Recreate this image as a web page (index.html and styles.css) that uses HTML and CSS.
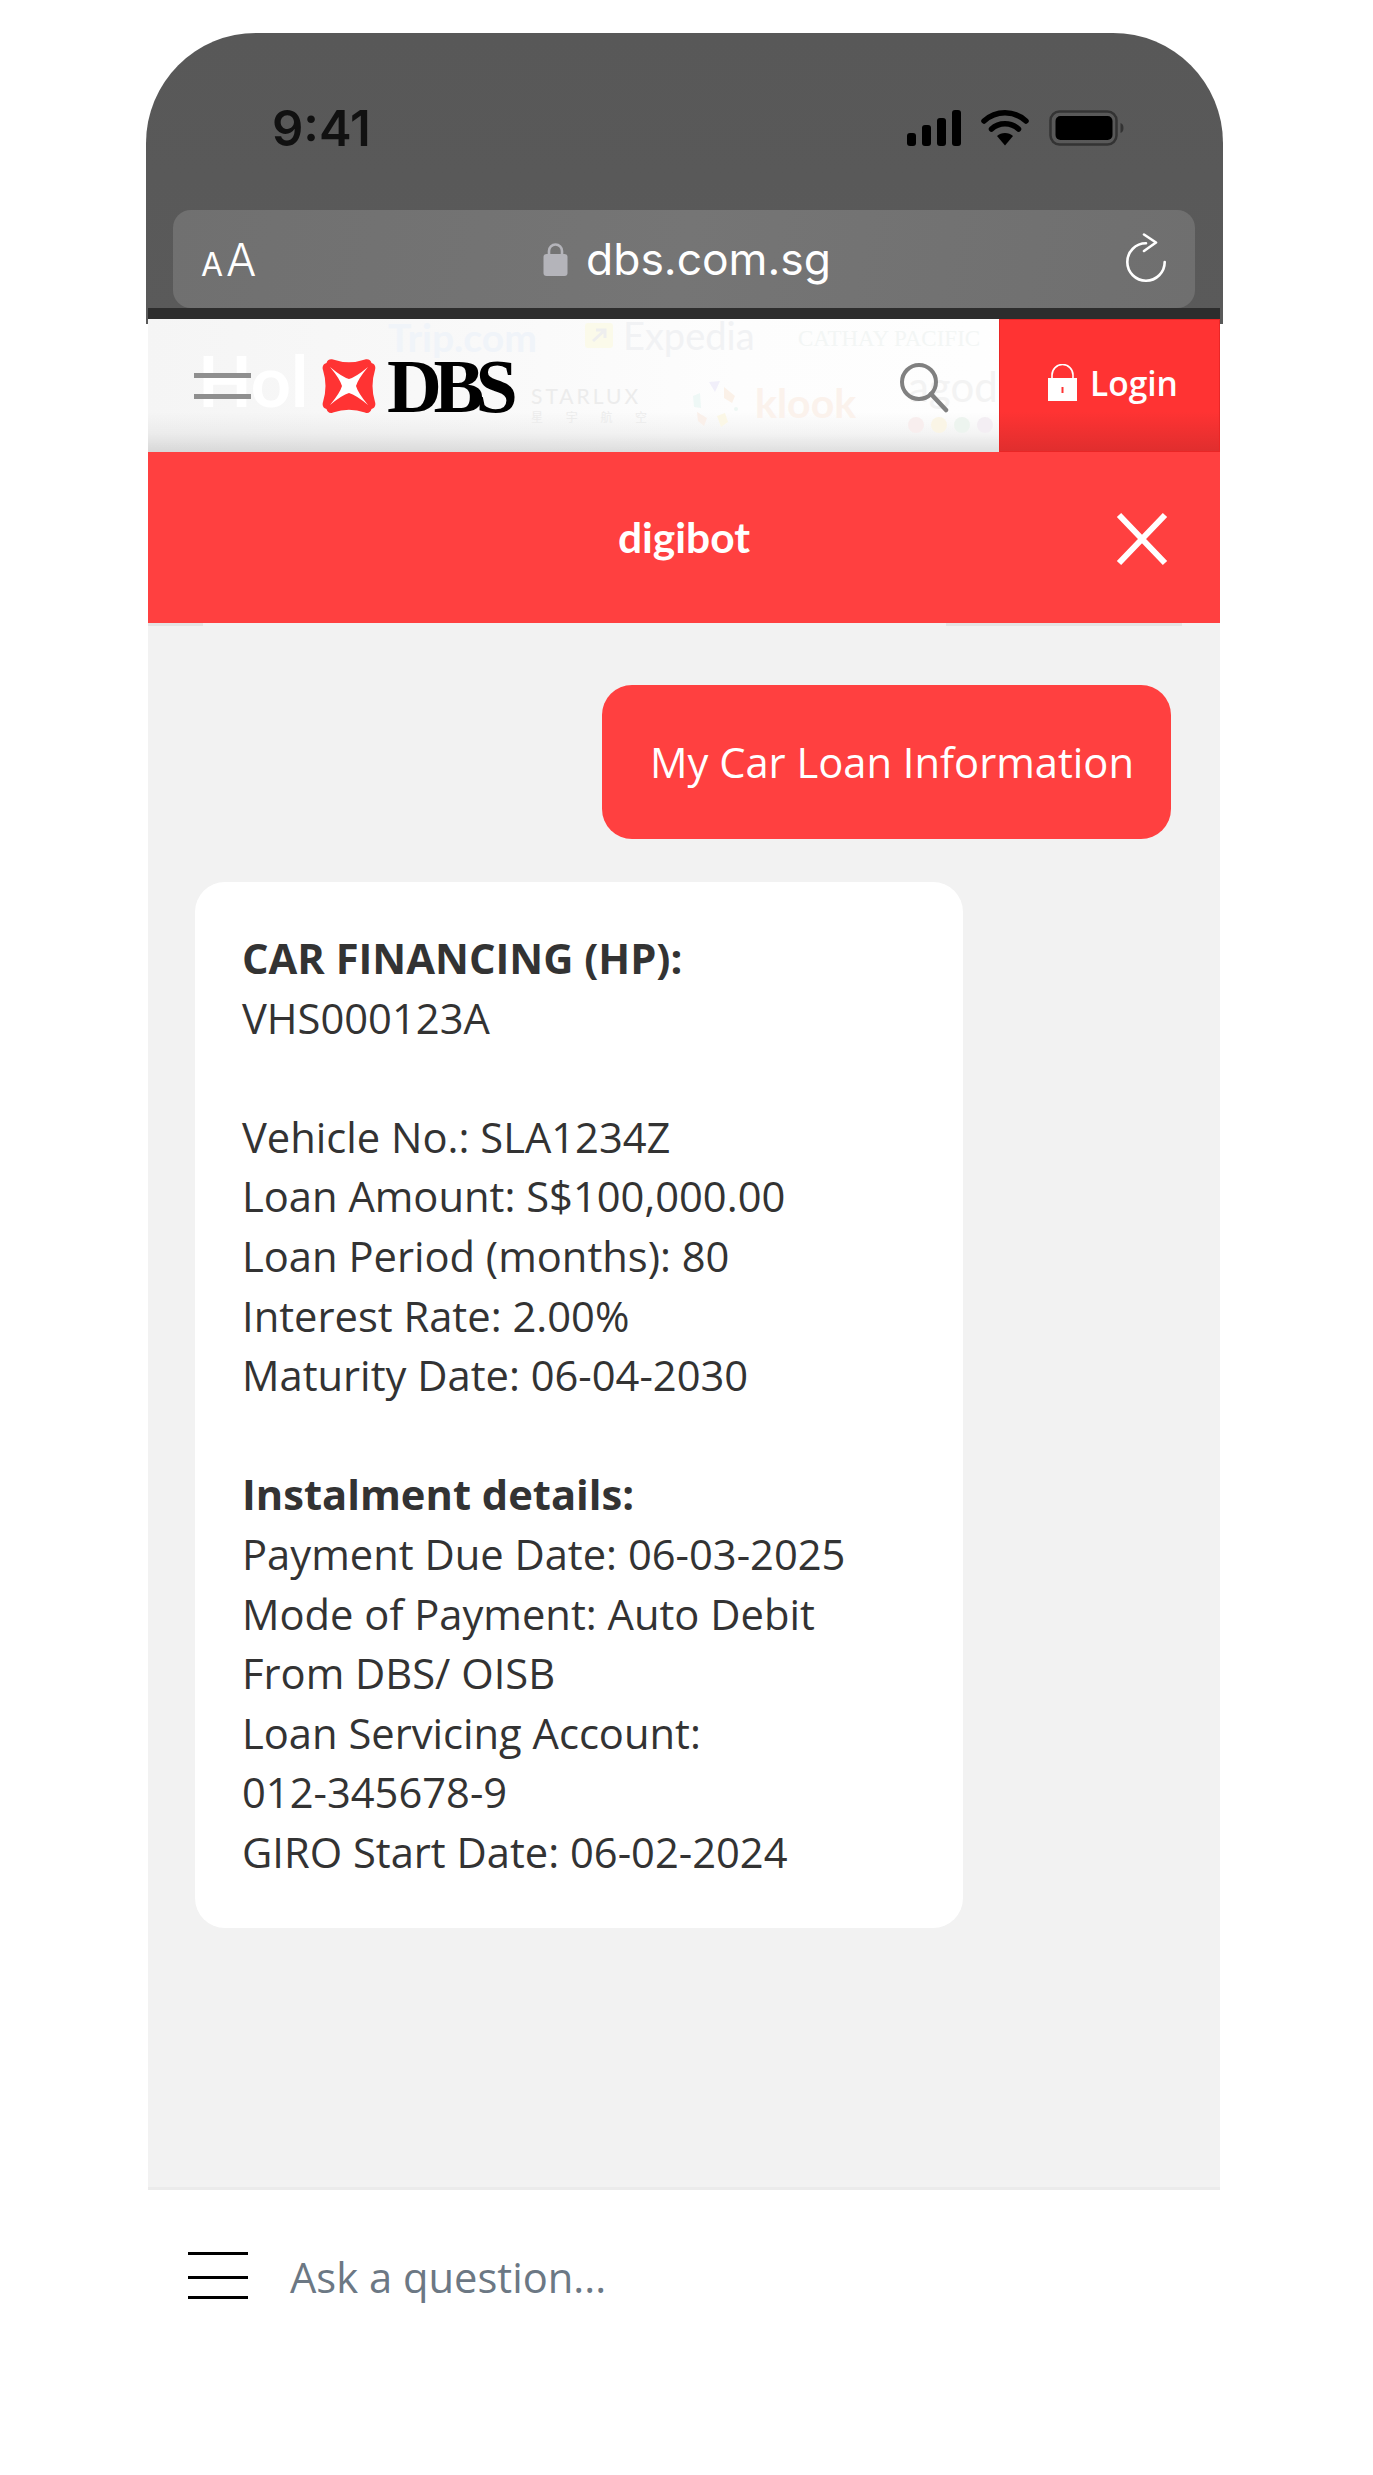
FILE: index.html
```html
<!DOCTYPE html>
<html lang="en">

<head>
    <meta charset="UTF-8">
    <title>digibot</title>
    <link rel="stylesheet" href="styles.css">
</head>

<body>
    <div class="phone">
        <div class="head">
            <div class="status">
                <span class="time">9:41</span>
                <div class="status-icons">
                    <svg width="54" height="36" viewBox="0 0 54 36">
                        <rect x="0" y="23" width="9" height="13" rx="3" />
                        <rect x="15" y="15" width="9" height="21" rx="3" />
                        <rect x="30" y="8" width="9" height="28" rx="3" />
                        <rect x="45" y="0" width="9" height="36" rx="3" />
                    </svg>
                    <svg width="48" height="36" viewBox="0 0 48 36">
                        <path d="M3 11 C15 0 33 0 45 11" fill="none" stroke="#000" stroke-width="5.5" stroke-linecap="round" />
                        <path d="M10.5 19 C18 12 30 12 37.5 19" fill="none" stroke="#000" stroke-width="5.5" stroke-linecap="round" />
                        <path d="M16 26 C20 22 28 22 32 26 L24 35.5 Z" />
                    </svg>
                    <svg width="76" height="36" viewBox="0 0 76 36">
                        <rect x="1.5" y="1.5" width="66" height="33" rx="9" fill="none" stroke="#333" stroke-width="2.5" />
                        <rect x="6.5" y="6" width="57" height="24" rx="5" />
                        <path d="M71.5 13 C75.5 14 75.5 22 71.5 23 Z" fill="#333" />
                    </svg>
                </div>
            </div>
            <div class="address">
                <span class="text-size"><small>A</small>A</span>
                <div class="url">
                    <svg width="25" height="34" viewBox="0 0 25 34">
                        <path d="M6 14 V9 a6.5 6.5 0 0 1 13 0 V14" fill="none" stroke="#b4b4ba" stroke-width="2.6" />
                        <rect x="0.5" y="12" width="24" height="22" rx="3" fill="#b4b4ba" />
                    </svg>
                    <span>dbs.com.sg</span>
                </div>
                <svg class="reload" width="40" height="50" viewBox="0 0 40 50">
                    <path d="M20 10.3 A18.7 18.7 0 1 0 38.7 29" fill="none" stroke="#fff" stroke-width="2.6" stroke-linecap="round" />
                    <path d="M18 1.5 L30 9.5 L18 18" fill="none" stroke="#fff" stroke-width="2.6" stroke-linecap="round" stroke-linejoin="round" />
                </svg>
            </div>
            <div class="band"></div>
        </div>

        <div class="page">
            <div class="site-nav">
                <div class="ghost">
                    <span class="g-holiday">Hol</span>
                    <span class="g-trip">Trip.com</span>
                    <svg class="g-arrow" width="28" height="25" viewBox="0 0 28 25">
                        <rect width="28" height="25" rx="3" fill="#fbfaea" />
                        <path d="M8 18 L20 7 M11 7 H20 V15" fill="none" stroke="#eeeeee" stroke-width="3" />
                    </svg>
                    <span class="g-expedia">Expedia</span>
                    <span class="g-cathay">CATHAY PACIFIC</span>
                    <span class="g-starlux">STARLUX</span>
                    <span class="g-starlux-cn">星 宇 航 空</span>
                    <svg class="g-wheel" width="48" height="48" viewBox="0 0 48 48">
                        <path d="M18 2 L29 1 L24 12 Z" fill="#f1effa" />
                        <path d="M33 7 L44 16 L41 23 L33 18 Z" fill="#fbf1e8" />
                        <circle cx="45" cy="29" r="2" fill="#eef7f4" />
                        <path d="M26 36 L34 33 L37 42 L30 47 Z" fill="#fbf7e6" />
                        <path d="M6 32 L16 38 L13 46 L7 41 Z" fill="#faf0ea" />
                        <path d="M2 16 L9 13 L10 28 L3 27 Z" fill="#eef8f6" />
                    </svg>
                    <span class="g-klook">klook</span>
                    <span class="g-agoda">agod</span>
                    <div class="g-dots">
                        <i></i>
                        <i></i>
                        <i></i>
                        <i></i>
                    </div>
                </div>
                <div class="burger">
                    <i></i>
                    <i></i>
                </div>
                <div class="logo">
                    <svg width="56" height="56" viewBox="0 0 56 56">
                        <path fill="#ff3333" d="M12 1.5 Q28 7 44 1.5 C47 0.5 50 2 50.5 5 C54 6 55 9 54 12 Q49 28 54 44 C55 47 54 50 50.5 51 C50 54 47 56 44 54.5 Q28 49 12 54.5 C9 56 6 54 5.5 51 C2 50 1 47 2 44 Q7 28 2 12 C1 9 2 6 5.5 5 C6 2 9 0.5 12 1.5 Z" />
                        <path fill="#fff" d="M9 9 Q21 19 28 21 Q35 19 47 9 Q37 21 35 28 Q37 35 47 47 Q35 37 28 35 Q21 37 9 47 Q19 35 21 28 Q19 21 9 9 Z" />
                    </svg>
                    <span>DBS</span>
                </div>
                <svg class="search" width="52" height="52" viewBox="0 0 52 52">
                    <circle cx="21" cy="21" r="17" fill="none" stroke="#808080" stroke-width="4" />
                    <path d="M33 33 L48 49" fill="none" stroke="#808080" stroke-width="4.5" stroke-linecap="round" />
                </svg>
                <div class="login">
                    <svg width="29" height="37" viewBox="0 0 29 37">
                        <path d="M4 15 V11 a10.5 10.5 0 0 1 21 0 V15" fill="none" stroke="#fff" stroke-width="1.6" />
                        <path fill="#fff" fill-rule="evenodd" d="M0 14 H29 V37 H0 Z M13.5 23 V29 H15.5 V23 Z" />
                    </svg>
                    <span>Login</span>
                </div>
            </div>

            <div class="bot-title">
                <span>digibot</span>
                <svg class="close" width="52" height="54" viewBox="0 0 52 54">
                    <path d="M3 3 L49 51 M49 3 L3 51" fill="none" stroke="#fff" stroke-width="6" />
                </svg>
            </div>
            <div class="title-edge">
                <i></i>
                <i></i>
            </div>

            <div class="chat">
                <div class="bubble-user">My Car Loan Information</div>
                <div class="bubble-bot">
                    <p><b>CAR FINANCING (HP):</b></p>
                    <p>VHS000123A</p>
                    <p class="gap">Vehicle No.: SLA1234Z</p>
                    <p>Loan Amount: S$100,000.00</p>
                    <p>Loan Period (months): 80</p>
                    <p>Interest Rate: 2.00%</p>
                    <p>Maturity Date: 06-04-2030</p>
                    <p class="gap"><b>Instalment details:</b></p>
                    <p>Payment Due Date: 06-03-2025</p>
                    <p>Mode of Payment: Auto Debit<br>From DBS/ OISB</p>
                    <p>Loan Servicing Account:<br>012-345678-9</p>
                    <p>GIRO Start Date: 06-02-2024</p>
                </div>
            </div>

            <div class="ask">
                <div class="ask-menu">
                    <i></i>
                    <i></i>
                    <i></i>
                </div>
                <span class="ask-text">Ask a question...</span>
            </div>
        </div>
    </div>
</body>

</html>
```

FILE: styles.css
```css
* {
    padding: 0;
    margin: 0;
    box-sizing: border-box;
}

html,
body {
    width: 100%;
    height: 100%;
    background: #fff;
}

body {
    padding-top: 33px;
    font-family: "Open Sans", "Liberation Sans", sans-serif;
}

.phone {
    width: 1077px;
    margin-left: 146px;
}

/* browser chrome */
.head {
    position: relative;
    height: 286px;
    padding: 0 28px 0 27px;
    border-radius: 110px 110px 0 0;
    background: linear-gradient(180deg, #585858 0%, #5a5a5a 100%);
}

.head::after {
    content: "";
    position: absolute;
    left: 0;
    right: 0;
    top: 100%;
    height: 5px;
    background: #595959;
}

.status {
    display: flex;
    align-items: center;
    justify-content: space-between;
    height: 177px;
    padding: 13px 70px 0 99px;
}

.time {
    font-family: Inter, "Liberation Sans", sans-serif;
    font-size: 49px;
    font-weight: 600;
    color: #111;
}

.status-icons {
    display: flex;
    align-items: center;
    gap: 20px;
}

.address {
    display: flex;
    align-items: center;
    position: relative;
    height: 98px;
    border-radius: 18px;
    background: linear-gradient(100deg, #707070 0%, #757575 50%, #6f6f6f 100%);
    color: #fff;
}

.text-size {
    position: absolute;
    left: 28px;
    top: 28px;
    font-family: Inter, "Liberation Sans", sans-serif;
    font-size: 45px;
    font-weight: 300;
    line-height: 44px;
}

.text-size small {
    font-size: 32px;
    font-weight: 400;
    margin-right: 3px;
}

.url {
    display: flex;
    align-items: center;
    justify-content: center;
    gap: 18px;
    width: 100%;
    padding-left: 6px;
    font-family: Inter, "Liberation Sans", sans-serif;
    font-size: 44.4px;
}

.reload {
    position: absolute;
    right: 29px;
    top: 23px;
}

.band {
    position: absolute;
    left: 2px;
    right: 3px;
    bottom: 0;
    height: 11px;
    background: #2d2d2d;
}

.page {
    position: relative;
    z-index: 2;
    width: 1072px;
    margin-left: 2px;
}

.site-nav {
    position: relative;
    display: flex;
    align-items: center;
    height: 133px;
    padding-left: 46px;
    background:
        linear-gradient(180deg, rgba(0, 0, 0, 0) 0%, rgba(0, 0, 0, 0) 70%, rgba(0, 0, 0, .04) 86%, rgba(0, 0, 0, .12) 100%),
        linear-gradient(90deg, #f5f5f5 0%, #f8f8f8 25%, #fdfdfd 55%, #ffffff 100%);
}

.ghost span,
.ghost svg,
.g-dots {
    position: absolute;
    white-space: nowrap;
}

.g-holiday {
    left: 50px;
    top: 26px;
    font-family: Lato, sans-serif;
    font-size: 70px;
    line-height: 70px;
    font-weight: 700;
    color: #fff;
}

.g-trip {
    left: 240px;
    top: 1px;
    font-family: Lato, sans-serif;
    font-size: 39px;
    line-height: 34px;
    font-weight: 700;
    color: #f0f4f9;
}

.g-arrow {
    left: 437px;
    top: 4px;
}

.g-expedia {
    left: 475px;
    top: 0;
    font-family: Lato, sans-serif;
    font-size: 38px;
    line-height: 32px;
    color: #f1f2f4;
}

.g-cathay {
    left: 650px;
    top: 10px;
    font-family: "Liberation Serif", serif;
    font-size: 23px;
    line-height: 20px;
    color: #f3f6f5;
}

.g-starlux {
    left: 383px;
    top: 67px;
    font-family: Lato, sans-serif;
    font-size: 21px;
    line-height: 20px;
    letter-spacing: 3px;
    color: #ececec;
}

.g-starlux-cn {
    left: 383px;
    top: 91px;
    font-family: "Noto Sans CJK SC", sans-serif;
    font-size: 12px;
    line-height: 14px;
    word-spacing: 20px;
    color: #ececec;
}

.g-wheel {
    left: 543px;
    top: 61px;
}

.g-klook {
    left: 607px;
    top: 64px;
    font-family: Lato, sans-serif;
    font-size: 41px;
    line-height: 40px;
    font-weight: 700;
    color: #fbf2ec;
}

.g-agoda {
    left: 760px;
    top: 45px;
    font-family: Lato, sans-serif;
    font-size: 42px;
    line-height: 44px;
    color: #f3f3f3;
}

.g-dots {
    left: 760px;
    top: 98px;
    display: flex;
    gap: 7px;
}

.g-dots i {
    width: 16px;
    height: 16px;
    border-radius: 8px;
    background: #f8eeee;
}

.g-dots i:nth-child(2) {
    background: #faf5e6;
}

.g-dots i:nth-child(3) {
    background: #edf4ef;
}

.g-dots i:nth-child(4) {
    background: #f3eef3;
}

.burger {
    position: relative;
    width: 57px;
}

.burger i {
    display: block;
    height: 5px;
    background: #8f8f8f;
    margin-bottom: 16px;
}

.burger i:last-child {
    margin-bottom: 0;
}

.logo {
    position: relative;
    display: flex;
    align-items: center;
    gap: 10px;
    margin-left: 70px;
    margin-top: 1px;
}

.logo span {
    font-family: "Liberation Serif", serif;
    font-size: 76px;
    font-weight: 700;
    line-height: 60px;
    letter-spacing: -8.5px;
    color: #000;
}

.search {
    position: relative;
    margin-left: auto;
    margin-right: 49px;
    margin-top: 2px;
}

.login {
    position: relative;
    display: flex;
    align-items: center;
    gap: 13px;
    align-self: stretch;
    width: 221px;
    padding: 0 0 6px 48px;
    border: 1px solid #e92626;
    background: linear-gradient(180deg, #ff3333 0%, #ff3333 70%, #e02e2e 100%);
    color: #fff;
    font-size: 33.5px;
    font-weight: 600;
}

/* red bar */
.bot-title {
    position: relative;
    display: flex;
    align-items: center;
    justify-content: center;
    height: 171px;
    padding-bottom: 2px;
    background: #ff4040;
    color: #fff;
    font-family: Lato, sans-serif;
    font-size: 42.5px;
    font-weight: 700;
}

.close {
    position: absolute;
    right: 52px;
    top: 60px;
}

.title-edge {
    position: relative;
    height: 0;
    z-index: 1;
}

.title-edge i {
    position: absolute;
    top: 0;
    height: 3px;
    background: #e4e4e4;
}

.title-edge i:first-child {
    left: 0;
    width: 55px;
}

.title-edge i:last-child {
    left: 798px;
    width: 236px;
}

/* messages */
.chat {
    display: flex;
    flex-direction: column;
    height: 1567px;
    padding: 62px 49px 0 47px;
    background: #f2f2f2;
    border-bottom: 3px solid #ebebeb;
    color: #333;
    font-size: 41.7px;
    line-height: 59.6px;
}

.bubble-user {
    align-self: flex-end;
    height: 154px;
    padding: 47px 37px 0 48px;
    border-radius: 30px;
    background: #ff4040;
    color: #fff;
    white-space: nowrap;
}

.bubble-bot {
    width: 768px;
    margin-top: 43px;
    padding: 46px 30px 46px 47px;
    border-radius: 30px;
    background: #fff;
}

.bubble-bot .gap {
    margin-top: 59.6px;
}

.bubble-bot b {
    font-weight: 700;
}

/* input row */
.ask {
    display: flex;
    align-items: flex-start;
    height: 285px;
    padding: 62px 0 0 40px;
    background: #fff;
}

.ask-menu {
    width: 60px;
}

.ask-menu i {
    display: block;
    height: 3px;
    background: #000;
    margin-bottom: 21px;
}

.ask-menu i:nth-child(2) {
    margin-bottom: 17px;
}

.ask-menu i:last-child {
    margin-bottom: 0;
}

.ask-text {
    margin-left: 42px;
    margin-top: -5px;
    color: #6c7884;
    font-size: 41.7px;
    line-height: 60px;
}
```
